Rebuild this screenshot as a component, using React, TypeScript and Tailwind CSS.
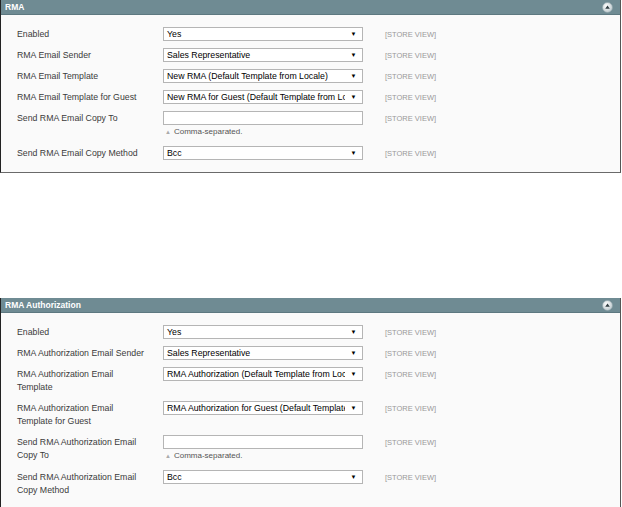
import React from "react";

type Row = {
  label: string[];
  kind: "select" | "input";
  value?: string;
};

const panel1: Row[] = [
  { label: ["Enabled"], kind: "select", value: "Yes" },
  { label: ["RMA Email Sender"], kind: "select", value: "Sales Representative" },
  { label: ["RMA Email Template"], kind: "select", value: "New RMA (Default Template from Locale)" },
  { label: ["RMA Email Template for Guest"], kind: "select", value: "New RMA for Guest (Default Template from Locale)" },
  { label: ["Send RMA Email Copy To"], kind: "input" },
  { label: ["Send RMA Email Copy Method"], kind: "select", value: "Bcc" },
];

const panel2: Row[] = [
  { label: ["Enabled"], kind: "select", value: "Yes" },
  { label: ["RMA Authorization Email Sender"], kind: "select", value: "Sales Representative" },
  { label: ["RMA Authorization Email", "Template"], kind: "select", value: "RMA Authorization (Default Template from Locale)" },
  { label: ["RMA Authorization Email", "Template for Guest"], kind: "select", value: "RMA Authorization for Guest (Default Template from Locale)" },
  { label: ["Send RMA Authorization Email", "Copy To"], kind: "input" },
  { label: ["Send RMA Authorization Email", "Copy Method"], kind: "select", value: "Bcc" },
];

function CollapseIcon() {
  return (
    <svg width="11" height="11" viewBox="0 0 11 11">
      <defs>
        <radialGradient id="g" cx="0.4" cy="0.35" r="0.7">
          <stop offset="0" stopColor="#ffffff" />
          <stop offset="1" stopColor="#b9c6ca" />
        </radialGradient>
      </defs>
      <circle cx="5.5" cy="5.5" r="5" fill="url(#g)" stroke="#8fa3a9" strokeWidth="0.6" />
      <path d="M3.2 6.8 L5.5 3.6 L7.8 6.8 Z" fill="#2e3b40" />
    </svg>
  );
}

function Field({ row }: { row: Row }) {
  return (
    <div className="flex items-start">
      <div className="w-[162px] pl-[16px] pr-[8px] leading-[13px] text-[#3a3a3a] pt-px">
        {row.label.map((l, i) => (
          <div key={i}>{l}</div>
        ))}
      </div>
      <div className="w-[200px] flex flex-col">
        {row.kind === "select" ? (
          <div className="h-[14px] border border-[#b5b5b5] bg-white flex items-center">
            <span className="flex-1 min-w-0 pl-[3px] whitespace-nowrap overflow-hidden text-black leading-[12px]">
              {row.value}
            </span>
            <span className="w-[17px] shrink-0 flex items-center justify-center text-[6px] text-black">
              ▼
            </span>
          </div>
        ) : (
          <>
            <div className="h-[14px] border border-[#b5b5b5] bg-white" />
            <div className="h-[14px] flex items-center pl-[2px] text-[8px] text-[#555]">
              <span className="text-[6px] text-[#aaa] mr-[3px]">▲</span>
              Comma-separated.
            </div>
          </>
        )}
      </div>
      <div className="ml-[22px] leading-[13px] pt-px text-[7.5px] text-[#999]">
        [STORE VIEW]
      </div>
    </div>
  );
}

function Panel({ title, rows }: { title: string; rows: Row[] }) {
  return (
    <div className="w-[621px] border-l border-l-[#222] border-r border-r-[#555] border-b border-b-[#6a6a6a] bg-[#fafafa]">
      <div className="h-[15px] bg-[#6f8b93] flex items-center justify-between pl-[4px] pr-[7px] border-b border-b-[#5d7880]">
        <span className="text-white font-bold text-[8.5px]">{title}</span>
        <CollapseIcon />
      </div>
      <div className="flex flex-col gap-[7px] pt-[12px] pb-[12px]">
        {rows.map((r, i) => (
          <Field key={i} row={r} />
        ))}
      </div>
    </div>
  );
}

export default function App() {
  return (
    <div
      className="w-[622px] h-[507px] bg-white text-[8.75px]"
      style={{ fontFamily: '"Liberation Sans", Arial, sans-serif' }}
    >
      <Panel title="RMA" rows={panel1} />
      <div className="h-[125px]" />
      <Panel title="RMA Authorization" rows={panel2} />
    </div>
  );
}
